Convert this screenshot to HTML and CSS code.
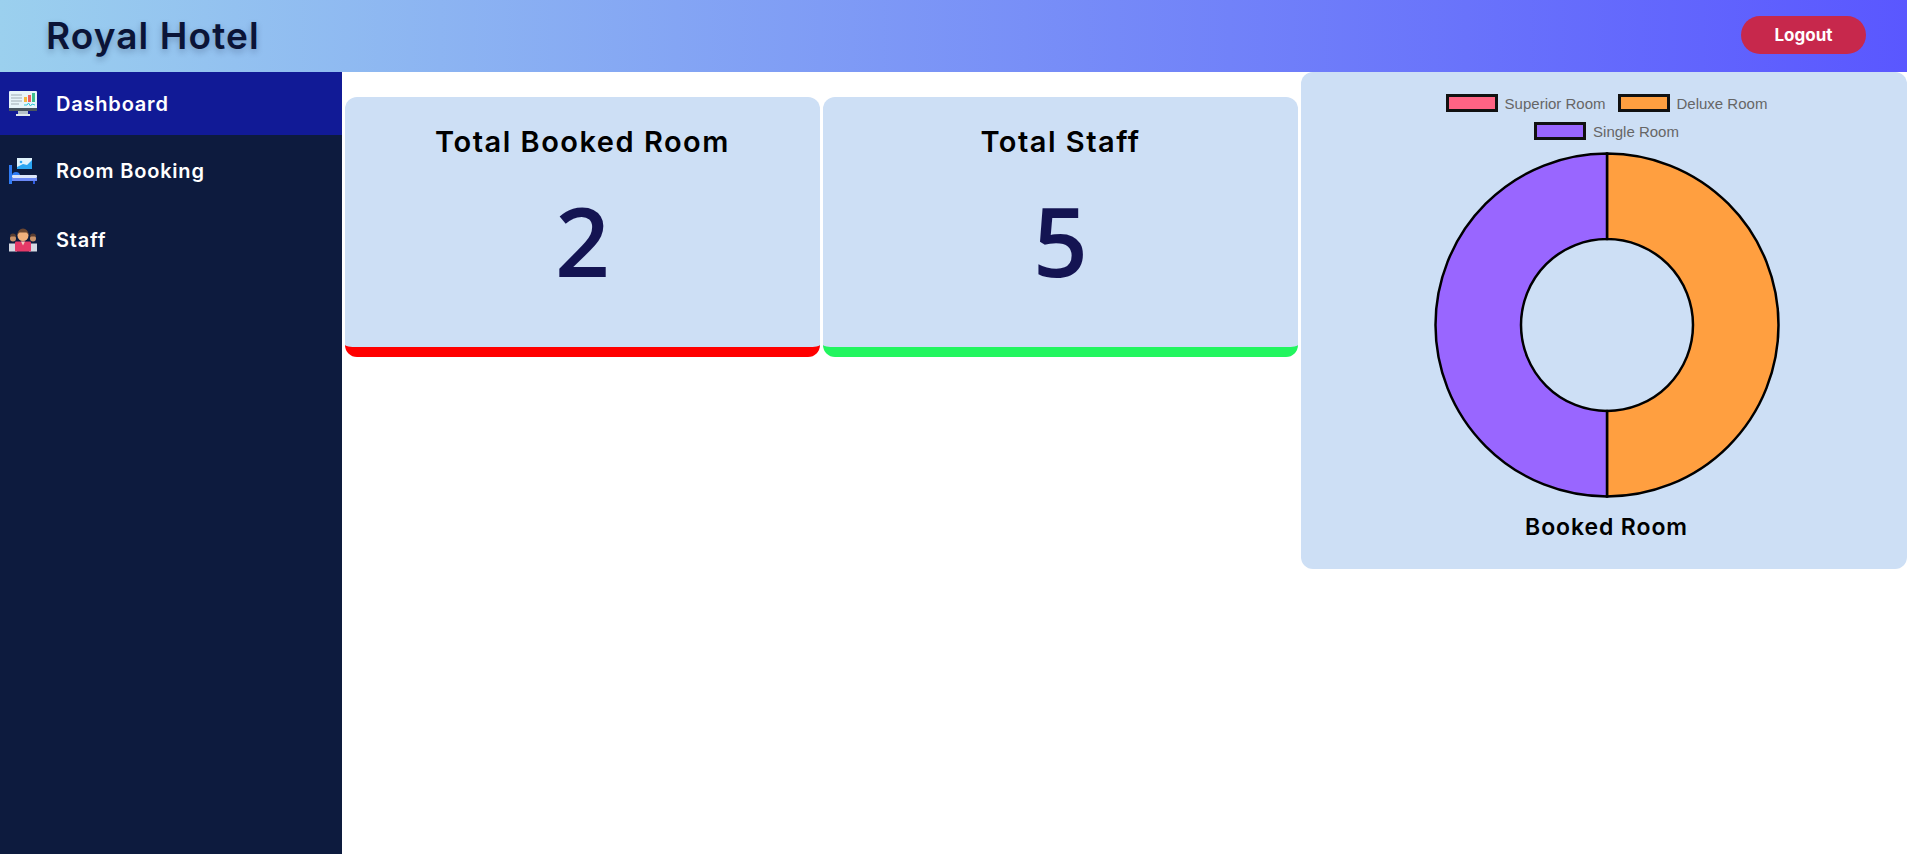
FILE: index.html
```html
<!DOCTYPE html>
<html lang="en">
<head>
<meta charset="utf-8">
<title>Royal Hotel</title>
<link rel="stylesheet" href="styles.css">
</head>
<body>
<header class="topbar">
  <h1 class="brand">Royal Hotel</h1>
  <button class="logout">Logout</button>
</header>
<div class="layout">
  <nav class="sidebar">
    <a class="nav-item active">
      <svg class="nav-icon" viewBox="0 0 28 26"><rect x="0" y="0" width="28" height="19" rx="1" fill="#e8f4fa"/><rect x="0" y="17" width="28" height="3" fill="#4a5560"/><rect x="9" y="20" width="10" height="3" fill="#b5c2c9"/><rect x="7" y="23" width="14" height="2" fill="#dfe8ec"/><path d="M2 4h11M2 7h11M2 10h11M2 13h8" stroke="#b8c4cc" stroke-width="1.5"/><rect x="15" y="6" width="3" height="5" fill="#f5b63f"/><rect x="19" y="4" width="3" height="7" fill="#ef5f5f"/><rect x="23" y="2" width="3" height="9" fill="#3fbf8f"/><path d="M15 14l3 0 1.500-2 2 3 1.500-2 3 1" fill="none" stroke="#30c8d8" stroke-width="1"/></svg>
      <span>Dashboard</span>
    </a>
    <a class="nav-item">
      <svg class="nav-icon" viewBox="0 0 28 26"><rect x="8" y="0" width="15" height="11" fill="#dff2fd"/><path d="M8 11l0-2 6-3 4 1 5-5v9z" fill="#2aa5f2"/><circle cx="12" cy="4" r="1.300" fill="#2aa5f2"/><rect x="0" y="7" width="3" height="19" fill="#2f7cf5"/><path d="M3 18a4 4 0 0 1 4-4 4 4 0 0 1 4 4z" fill="#2f7cf5"/><rect x="3" y="17" width="25" height="3" rx="1" fill="#dce6fa"/><rect x="3" y="20" width="25" height="3" fill="#6a88f5"/><rect x="24" y="23" width="2" height="3" fill="#2f5ce0"/></svg>
      <span>Room Booking</span>
    </a>
    <a class="nav-item">
      <svg class="nav-icon" viewBox="0 0 28 23"><circle cx="4" cy="10" r="3" fill="#c99268"/><path d="M1 8a3 3 0 0 1 6 0z" fill="#5a3d30"/><circle cx="24" cy="10" r="3" fill="#c99268"/><path d="M21 8a3 3 0 0 1 6 0z" fill="#5a3d30"/><rect x="0" y="15" width="8" height="8" fill="#d5d9e2"/><rect x="20" y="15" width="8" height="8" fill="#d5d9e2"/><circle cx="14" cy="7" r="5.500" fill="#f0b07c"/><path d="M8.500 6a5.500 6 0 0 1 11 0l-2-2h-7z" fill="#6b4630"/><rect x="6" y="13" width="16" height="10" rx="1" fill="#e53a68"/><path d="M12 13h4l-2 4z" fill="#f0d0c0"/></svg>
      <span>Staff</span>
    </a>
  </nav>
  <main class="content">
    <section class="card card-red">
      <h2 class="card-title">Total Booked Room</h2>
      <p class="card-value">2</p>
    </section>
    <section class="card card-green">
      <h2 class="card-title">Total Staff</h2>
      <p class="card-value">5</p>
    </section>
    <section class="chart-card">
      <div class="legend">
        <span class="legend-item"><i class="swatch swatch-pink"></i>Superior Room</span>
        <span class="legend-item"><i class="swatch swatch-orange"></i>Deluxe Room</span>
        <span class="legend-item"><i class="swatch swatch-purple"></i>Single Room</span>
      </div>
      <svg class="donut" viewBox="0 0 346 346" width="346" height="346">
        <path d="M173 1.500A171.500 171.500 0 0 1 173 344.500V259A86 86 0 0 0 173 87Z" fill="#ff9f40" stroke="#000" stroke-width="2.500"/>
        <path d="M173 344.500A171.500 171.500 0 0 1 173 1.500V87A86 86 0 0 0 173 259Z" fill="#9966ff" stroke="#000" stroke-width="2.500"/>
      </svg>
      <h3 class="chart-title">Booked Room</h3>
    </section>
  </main>
</div>
</body>
</html>
```
FILE: styles.css
```css
* { box-sizing: border-box; }
html, body { margin: 0; }
body {
  font-family: "Inter", "Open Sans", sans-serif;
  background: #fff;
  height: 854px;
  overflow: hidden;
}
.topbar {
  height: 72px;
  display: flex;
  align-items: center;
  justify-content: space-between;
  padding: 0 41px 0 46px;
  background: linear-gradient(90deg, #9bd0ee 0%, #5a57ff 100%);
}
.brand {
  margin: -2px 0 0;
  font-size: 37px;
  font-weight: 600;
  color: #0b1437;
  text-shadow: 0 3px 6px rgba(11, 20, 55, 0.25);
  letter-spacing: 1.100px;
}
.logout {
  width: 125px;
  height: 38px;
  border: 0;
  border-radius: 19px;
  background: #c7284c;
  color: #fff;
  font: 700 17px "Inter", sans-serif;
  margin-top: -2px;
}
.layout { display: flex; height: 782px; }
.sidebar {
  width: 342px;
  flex: none;
  background: #0d1b3e;
}
.nav-item {
  display: flex;
  align-items: center;
  gap: 19px;
  height: 69px;
  padding: 2px 0 0 9px;
  color: #fff;
  font-size: 20px;
  font-weight: 600;
  letter-spacing: 0.800px;
}
.nav-item.active {
  height: 63px;
  padding-top: 0;
  background: #111a96;
}
.nav-icon { width: 28px; height: 26px; flex: none; }
.content {
  flex: 1;
  display: flex;
  align-items: flex-start;
  gap: 3px;
  padding-left: 3px;
  min-width: 0;
}
.card {
  width: 475px;
  height: 260px;
  margin-top: 25px;
  background: #cddff5;
  border-radius: 12px;
  text-align: center;
  padding-top: 25px;
  border-bottom: 10px solid;
}
.card-red { border-bottom-color: #ff0000; }
.card-green { border-bottom-color: #22f55f; }
.card-title {
  margin: 0;
  font-size: 29px;
  line-height: 40px;
  font-weight: 600;
  color: #000;
  letter-spacing: 1.500px;
}
.card-value {
  margin: 23px 0 0;
  font-family: "Open Sans", sans-serif;
  font-size: 96px;
  line-height: 110px;
  font-weight: 600;
  color: #141452;
}
.chart-card {
  flex: 1;
  height: 497px;
  background: #cddff5;
  border-radius: 12px;
  display: flex;
  flex-direction: column;
  align-items: center;
  padding: 22px 0 0 5px;
}
.legend {
  width: 420px;
  display: flex;
  flex-wrap: wrap;
  justify-content: center;
  column-gap: 12px;
  row-gap: 10px;
  font: 15px "Liberation Sans", sans-serif;
  color: #666;
}
.legend-item { display: flex; align-items: center; gap: 7px; height: 18px; }
.swatch { width: 52px; height: 18px; border: 3px solid #111; display: block; }
.swatch-pink { background: #ff6384; }
.swatch-orange { background: #ff9f40; }
.swatch-purple { background: #9966ff; }
.donut { margin-top: 12px; flex: none; }
.chart-title {
  margin: 13px 0 0;
  font-size: 23px;
  line-height: 32px;
  font-weight: 600;
  color: #000;
  letter-spacing: 0.900px;
}
```
